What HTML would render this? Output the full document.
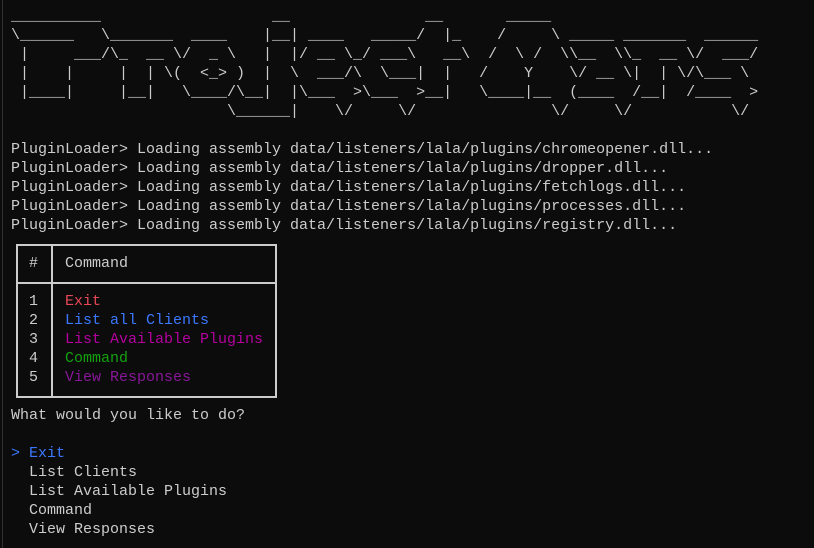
<!DOCTYPE html>
<html><head><meta charset="utf-8"><style>
html,body{margin:0;padding:0;background:#0c0c0c;width:814px;height:548px;overflow:hidden}
body{position:relative;font-family:"Liberation Mono",monospace;font-size:15px;color:#cccccc}
pre{margin:0;position:absolute;left:11px;top:7px;font:inherit;line-height:19px;white-space:pre}
.bar{position:absolute;left:2px;top:0;width:1px;height:548px;background:#303030}
.box{position:absolute;left:16px;top:244px;width:257px;height:150px;border:2px solid #cccccc}
.vd{position:absolute;left:51px;top:244px;width:2px;height:153px;background:#cccccc}
.hd{position:absolute;left:16px;top:282px;width:261px;height:2px;background:#cccccc}
.r{color:#e74856}.b{color:#3b78ff}.m{color:#b4009e}.g{color:#13a10e}.p{color:#881798}
</style></head><body>
<div class="bar"></div>
<div class="box"></div><div class="vd"></div><div class="hd"></div>
<pre>__________                   __               __       _____
\______   \_______  ____    |__| ____   _____/  |_    /     \ _____ _______  ______
 |     ___/\_  __ \/  _ \   |  |/ __ \_/ ___\   __\  /  \ /  \\__  \\_  __ \/  ___/
 |    |     |  | \(  <_> )  |  \  ___/\  \___|  |   /    Y    \/ __ \|  | \/\___ \
 |____|     |__|   \____/\__|  |\___  >\___  >__|   \____|__  (____  /__|  /____  >
                        \______|    \/     \/               \/     \/           \/

PluginLoader> Loading assembly data/listeners/lala/plugins/chromeopener.dll...
PluginLoader> Loading assembly data/listeners/lala/plugins/dropper.dll...
PluginLoader> Loading assembly data/listeners/lala/plugins/fetchlogs.dll...
PluginLoader> Loading assembly data/listeners/lala/plugins/processes.dll...
PluginLoader> Loading assembly data/listeners/lala/plugins/registry.dll...

  #   Command

  1   <span class="r">Exit</span>
  2   <span class="b">List all Clients</span>
  3   <span class="m">List Available Plugins</span>
  4   <span class="g">Command</span>
  5   <span class="p">View Responses</span>

What would you like to do?

<span class="b">&gt; Exit</span>
  List Clients
  List Available Plugins
  Command
  View Responses</pre>
</body></html>
